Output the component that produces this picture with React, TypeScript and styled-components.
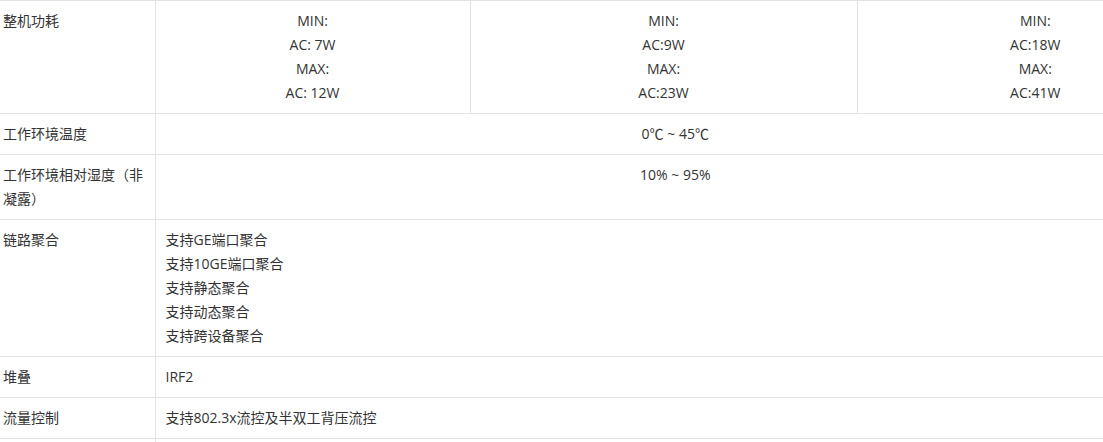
import React from 'react';
import styled, { createGlobalStyle } from 'styled-components';

const GlobalStyle = createGlobalStyle`
	html, body {
		margin: 0;
		padding: 0;
		background: #fff;
		overflow: hidden;
	}
	body {
		font-family: "Open Sans", "Noto Sans CJK SC", sans-serif;
		font-size: 14px;
		color: #333;
	}
`;

const SpecTable = styled.table`
	width: 1214px;
	border-collapse: collapse;
	table-layout: fixed;
	border-top: 1px solid #e8e8e8;

	td {
		border: 1px solid #e3e3e3;
		border-left: none;
		line-height: 24px;
		vertical-align: top;
		padding: 8px 10px;
	}
`;

const Label = styled.td`
	&& {
		padding-left: 3px;
		padding-right: 10px;
	}
`;

const Value = styled.td<{ $center?: boolean; $wide?: boolean }>`
	text-align: ${p => (p.$center ? 'center' : 'left')};
	&& {
		padding-right: ${p => (p.$wide ? '28px' : '10px')};
	}
`;

type Power = { min: string; max: string };

const power: Power[] = [
	{ min: 'AC: 7W', max: 'AC: 12W' },
	{ min: 'AC:9W', max: 'AC:23W' },
	{ min: 'AC:18W', max: 'AC:41W' }
];

const aggregation = [
	'支持GE端口聚合',
	'支持10GE端口聚合',
	'支持静态聚合',
	'支持动态聚合',
	'支持跨设备聚合'
];

export default function App() {
	return (
		<>
			<GlobalStyle />
			<SpecTable>
				<colgroup>
					<col style={{ width: 155 }} />
					<col style={{ width: 315 }} />
					<col style={{ width: 387 }} />
					<col />
				</colgroup>
				<tbody>
					<tr>
						<Label>整机功耗</Label>
						{power.map((p, i) => (
							<Value $center key={i}>
								MIN:
								<br />
								{p.min}
								<br />
								MAX:
								<br />
								{p.max}
							</Value>
						))}
					</tr>
					<tr>
						<Label>工作环境温度</Label>
						<Value $center $wide colSpan={3}>
							0℃ ~ 45℃
						</Value>
					</tr>
					<tr>
						<Label>工作环境相对湿度（非凝露）</Label>
						<Value $center $wide colSpan={3}>
							10% ~ 95%
						</Value>
					</tr>
					<tr>
						<Label>链路聚合</Label>
						<Value colSpan={3}>
							{aggregation.map(a => (
								<div key={a}>{a}</div>
							))}
						</Value>
					</tr>
					<tr>
						<Label>堆叠</Label>
						<Value colSpan={3}>IRF2</Value>
					</tr>
					<tr>
						<Label>流量控制</Label>
						<Value colSpan={3}>支持802.3x流控及半双工背压流控</Value>
					</tr>
					<tr>
						<Label>&nbsp;</Label>
						<Value colSpan={3}>&nbsp;</Value>
					</tr>
				</tbody>
			</SpecTable>
		</>
	);
}
